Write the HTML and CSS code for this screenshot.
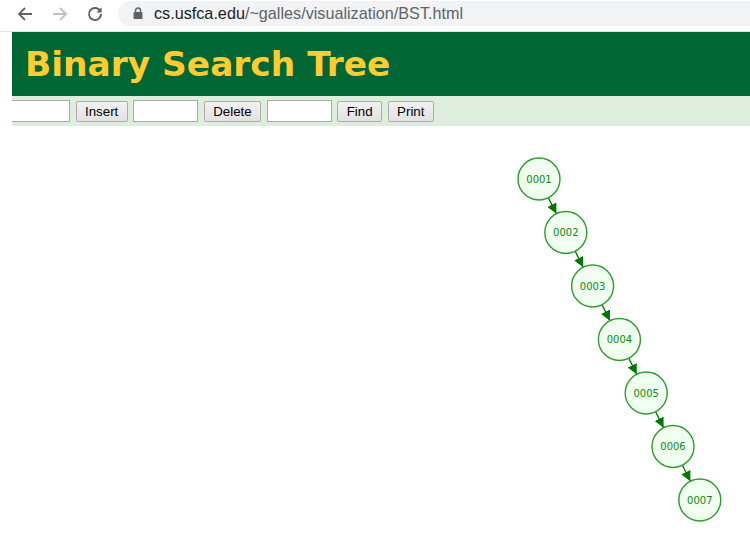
FILE: index.html
```html
<!DOCTYPE html>
<html>
<head>
<meta charset="utf-8">
<title>BST</title>
<link rel="stylesheet" href="styles.css">
</head>
<body>
<div class="chrome">
  <div class="navs">
    <svg class="nav" width="18" height="18" viewBox="0 0 18 18"><path d="M16 9H3.5M9 3 3 9l6 6" fill="none" stroke="#5f6368" stroke-width="1.8"/></svg>
    <svg class="nav" width="18" height="18" viewBox="0 0 18 18"><path d="M2 9h12.5M9 3l6 6-6 6" fill="none" stroke="#bdc1c6" stroke-width="1.8"/></svg>
    <svg class="nav" width="18" height="18" viewBox="0 0 18 18"><path d="M14.3 6.2A6 6 0 1 0 15 9" fill="none" stroke="#5f6368" stroke-width="1.9"/><path d="M15.6 2.2v5.2h-5.2z" fill="#5f6368"/></svg>
  </div>
  <div class="omni">
    <svg class="lock" width="10" height="12" viewBox="0 0 10 12"><path d="M2.5 5V3.5a2.5 2.5 0 0 1 5 0V5" fill="none" stroke="#5f6368" stroke-width="1.5"/><rect x="0.5" y="5" width="9" height="7" rx="1" fill="#5f6368"/></svg>
    <span class="url"><span class="host">cs.usfca.edu</span>/~galles/visualization/BST.html</span>
  </div>
</div>
<div class="page">
  <div class="gutter"></div>
  <div class="main">
    <div class="header"><h1 class="title">Binary Search Tree</h1></div>
    <div class="toolbar">
      <input class="field first" type="text">
      <button class="btn">Insert</button>
      <input class="field" type="text">
      <button class="btn">Delete</button>
      <input class="field" type="text">
      <button class="btn">Find</button>
      <button class="btn">Print</button>
    </div>
    <svg class="canvas" width="738" height="427" viewBox="0 0 738 427">
      <defs>
        <marker id="ah" viewBox="0 0 10 10" refX="10" refY="5" markerWidth="10" markerHeight="10" markerUnits="userSpaceOnUse" orient="auto">
          <path d="M0 0 10 5 0 10z" fill="#007700"/>
        </marker>
      </defs>
      <g class="edges">
        <line x1="536.4" y1="71.8" x2="544.4" y2="87.7"/>
        <line x1="563.2" y1="125.3" x2="571.2" y2="141.2"/>
        <line x1="590.0" y1="178.8" x2="598.0" y2="194.7"/>
        <line x1="616.8" y1="232.3" x2="624.8" y2="248.2"/>
        <line x1="643.6" y1="285.8" x2="651.6" y2="301.7"/>
        <line x1="670.4" y1="339.3" x2="678.4" y2="355.2"/>
      </g>
      <g class="nodes">
        <circle cx="527" cy="53" r="21"/><text x="527" y="56.5">0001</text>
        <circle cx="553.8" cy="106.5" r="21"/><text x="553.8" y="110">0002</text>
        <circle cx="580.6" cy="160" r="21"/><text x="580.6" y="163.5">0003</text>
        <circle cx="607.4" cy="213.5" r="21"/><text x="607.4" y="217">0004</text>
        <circle cx="634.2" cy="267" r="21"/><text x="634.2" y="270.5">0005</text>
        <circle cx="661" cy="320.5" r="21"/><text x="661" y="324">0006</text>
        <circle cx="687.8" cy="374" r="21"/><text x="687.8" y="377.5">0007</text>
      </g>
    </svg>
  </div>
</div>
</body>
</html>
```
FILE: styles.css
```css
html, body {
  margin: 0;
  padding: 0;
  background: #fff;
  overflow: hidden;
}
body {
  width: 750px;
  height: 553px;
}
.chrome {
  height: 31px;
  border-bottom: 1px solid #e3e3e3;
  display: flex;
  align-items: center;
  background: #fff;
}
.navs {
  display: flex;
  align-items: center;
  gap: 17px;
  padding-left: 16px;
  width: 102px;
  margin-top: -4px;
}
.nav { display: block; }
.omni {
  flex: 1;
  height: 25px;
  margin-top: -5px;
  background: #f1f3f4;
  border-radius: 13px 0 0 13px;
  display: flex;
  align-items: center;
  padding-left: 15px;
  gap: 11px;
}
.lock { display: block; }
.url {
  font-family: "Liberation Sans", Arial, sans-serif;
  font-size: 16.2px;
  color: #5f6368;
  white-space: nowrap;
}
.host { color: #202124; }
.page {
  display: flex;
}
.gutter {
  width: 12px;
  flex: none;
}
.main {
  flex: 1;
  overflow: hidden;
}
.header {
  height: 64px;
  background: #006633;
  display: flex;
  align-items: center;
}
.title {
  margin: 0 0 0 13px;
  font-family: "DejaVu Sans", Verdana, sans-serif;
  font-weight: bold;
  font-size: 34.4px;
  color: #ffcc33;
  letter-spacing: 0;
}
.toolbar {
  height: 30px;
  background: #ddeedd;
  display: flex;
  align-items: center;
  gap: 5.5px;
  white-space: nowrap;
}
.field {
  box-sizing: border-box;
  width: 65px;
  height: 22px;
  margin: 0;
  padding: 0 2px;
  border: 1px solid #a9a9a9;
  background: #fff;
  flex: none;
}
.field.first {
  margin-left: -7px;
}
.btn {
  box-sizing: border-box;
  height: 21px;
  margin: 0;
  padding: 0 8.5px;
  font-family: "Liberation Sans", Arial, sans-serif;
  font-size: 13.3px;
  color: #000;
  background: linear-gradient(#f2f2f2, #e2e2e2);
  border: 1px solid #adadad;
  border-radius: 2px;
  flex: none;
}
.canvas {
  display: block;
}
.edges line {
  stroke: #007700;
  stroke-width: 1.4;
  marker-end: url(#ah);
}
.nodes circle {
  fill: #f0fff0;
  stroke: #2f9a2f;
  stroke-width: 1.4;
}
.nodes text {
  font-family: "DejaVu Sans", Verdana, sans-serif;
  font-size: 10px;
  fill: #118811;
  text-anchor: middle;
}
```
